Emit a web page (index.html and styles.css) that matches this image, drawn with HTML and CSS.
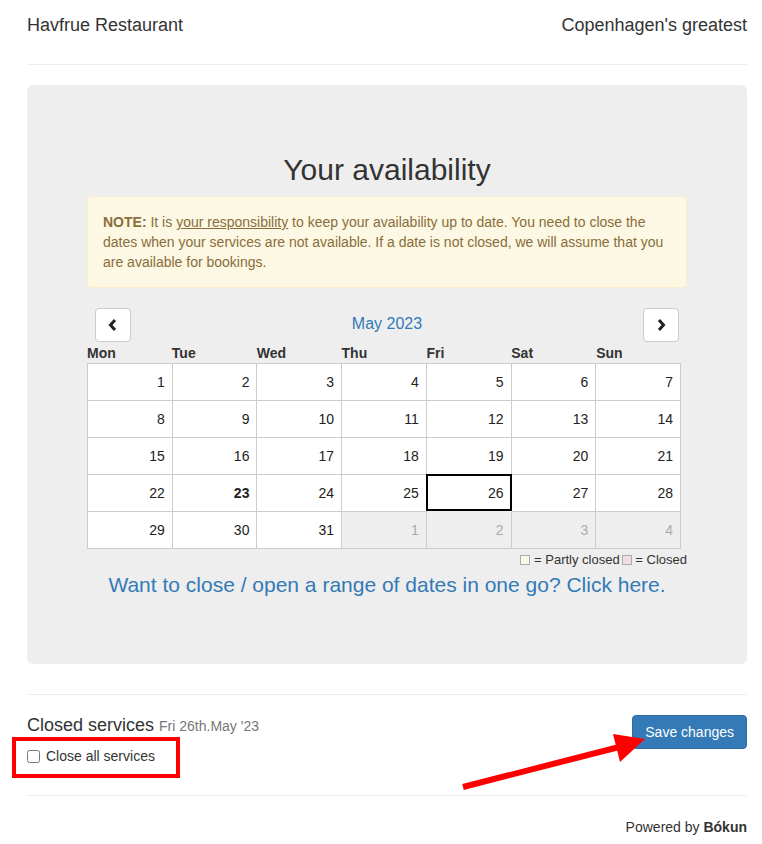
FILE: index.html
```html
<!DOCTYPE html>
<html>
<head>
<meta charset="utf-8">
<link rel="stylesheet" href="styles.css">
</head>
<body>
<div class="page">
  <header class="top">
    <span class="brand">Havfrue Restaurant</span>
    <span class="tagline">Copenhagen's greatest</span>
  </header>

  <section class="jumbo">
    <h2 class="title">Your availability</h2>
    <div class="alert"><strong>NOTE:</strong> It is <u>your responsibility</u> to keep your availability up to date. You need to close the dates when your services are not available. If a date is not closed, we will assume that you are available for bookings.</div>

    <div class="cal">
      <div class="cal-nav">
        <button class="nav-btn prev" aria-label="Previous"><svg width="12" height="14" viewBox="0 0 12 14"><polyline points="8,2 3.5,7 8,12" fill="none" stroke="#222" stroke-width="3"/></svg></button>
        <span class="month">May 2023</span>
        <button class="nav-btn next" aria-label="Next"><svg width="12" height="14" viewBox="0 0 12 14"><polyline points="4,2 8.5,7 4,12" fill="none" stroke="#222" stroke-width="3"/></svg></button>
      </div>
      <div class="dow">
        <span>Mon</span><span>Tue</span><span>Wed</span><span>Thu</span><span>Fri</span><span>Sat</span><span>Sun</span>
      </div>
      <div class="grid">
        <div class="d">1</div><div class="d">2</div><div class="d">3</div><div class="d">4</div><div class="d">5</div><div class="d">6</div><div class="d">7</div>
        <div class="d">8</div><div class="d">9</div><div class="d">10</div><div class="d">11</div><div class="d">12</div><div class="d">13</div><div class="d">14</div>
        <div class="d">15</div><div class="d">16</div><div class="d">17</div><div class="d">18</div><div class="d">19</div><div class="d">20</div><div class="d">21</div>
        <div class="d">22</div><div class="d today">23</div><div class="d">24</div><div class="d">25</div><div class="d sel">26</div><div class="d">27</div><div class="d">28</div>
        <div class="d">29</div><div class="d">30</div><div class="d">31</div><div class="d out">1</div><div class="d out">2</div><div class="d out">3</div><div class="d out">4</div>
      </div>
    </div>
    <div class="legend"><i class="sq partly"></i> = Partly closed<i class="sq closed"></i> = Closed</div>
    <a class="range" href="#">Want to close / open a range of dates in one go? Click here.</a>
  </section>

  <section class="services">
    <div class="svc-left">
      <h4 class="svc-title">Closed services <small>Fri 26th.May '23</small></h4>
      <label class="check"><input type="checkbox"> Close all services</label>
      <div class="mark-box"></div>
    </div>
    <button class="save">Save changes</button>
    <svg class="arrow" width="200" height="70" viewBox="0 0 200 70"><line x1="2" y1="62" x2="166" y2="20" stroke="#f00" stroke-width="6"/><polygon points="184,14 152,9 159,37" fill="#f00"/></svg>
  </section>

  <footer class="foot">Powered by <b>Bókun</b></footer>
</div>
</body>
</html>
```
FILE: styles.css
```css
* { box-sizing: border-box; }
html, body { margin: 0; padding: 0; background: #fff; }
body { font-family: "Liberation Sans", Arial, sans-serif; font-size: 14px; line-height: 20px; color: #333; }
.page { padding: 0 15px 0 27px; }

.top { display: flex; justify-content: space-between; align-items: center; height: 65px; padding-bottom: 14px; border-bottom: 1px solid #eee; font-size: 18px; line-height: 20px; }

.jumbo { margin-top: 20px; background: #eee; border-radius: 6px; padding: 68px 60px 0; height: 579px; }
.title { margin: 0 0 10px; text-align: center; font-size: 30px; font-weight: 500; line-height: 33px; color: #333; }
.alert { background: #fcf8e3; border: 1px solid #faebcc; color: #8a6d3b; border-radius: 4px; padding: 15px; margin-bottom: 20px; }
.alert strong { font-weight: bold; }

.cal { width: 594px; }
.cal-nav { display: flex; align-items: center; justify-content: space-between; height: 34px; padding: 0 2px 0 8px; }
.nav-btn { width: 36px; height: 34px; background: #fff; border: 1px solid #ccc; border-radius: 4px; display: flex; align-items: center; justify-content: center; padding: 0; }
.month { color: #337ab7; font-size: 16px; padding-bottom: 3px; }
.dow { display: grid; grid-template-columns: repeat(7, 1fr); height: 21px; align-items: center; font-weight: bold; font-size: 14px; padding-top: 1px; }
.grid { display: grid; grid-template-columns: repeat(7, 1fr); border-top: 1px solid #ccc; border-left: 1px solid #ccc; }
.d { height: 37px; background: #fff; border-right: 1px solid #ccc; border-bottom: 1px solid #ccc; display: flex; align-items: center; justify-content: flex-end; padding-right: 7px; color: #222; }
.d.today { font-weight: bold; }
.d.sel { position: relative; top: -1px; left: -1px; height: 37px; border: 2px solid #000; margin-right: -1px; padding-right: 6px; }
.d.out { background: #eee; color: #aaa; }

.legend { text-align: right; font-size: 13px; line-height: 16px; margin-top: 3px; color: #333; }
.sq { display: inline-block; width: 10px; height: 10px; border: 1px solid #aaa; vertical-align: -1px; }
.sq.partly { background: #fcf8e3; }
.sq.closed { background: #f2dede; margin-left: 2px; }
.range { display: block; text-align: center; color: #337ab7; text-decoration: none; font-size: 21px; line-height: 24px; margin-top: 5px; }

.services { position: relative; display: flex; justify-content: space-between; align-items: flex-start; margin-top: 30px; border-top: 1px solid #eee; border-bottom: 1px solid #eee; padding-top: 20px; height: 102px; }
.svc-left { position: relative; }
.svc-title { margin: 0; font-size: 18px; font-weight: 500; line-height: 20px; }
.svc-title small { font-size: 14px; color: #777; font-weight: normal; }
.check { display: flex; align-items: center; gap: 6px; margin-top: 10px; font-size: 14px; }
.check input { margin: 0; width: 13px; height: 13px; }
.mark-box { position: absolute; left: -15px; top: 22px; width: 168px; height: 41px; border: 4px solid #f00; }
.save { background: #337ab7; color: #fff; border: 1px solid #2e6da4; border-radius: 4px; font-family: inherit; font-size: 14px; line-height: 20px; padding: 6px 12px; margin-top: 0; }
.arrow { position: absolute; left: 434px; top: 30px; }

.foot { text-align: right; padding: 21px 0; line-height: 20px; }
.foot b { font-weight: bold; }
```
